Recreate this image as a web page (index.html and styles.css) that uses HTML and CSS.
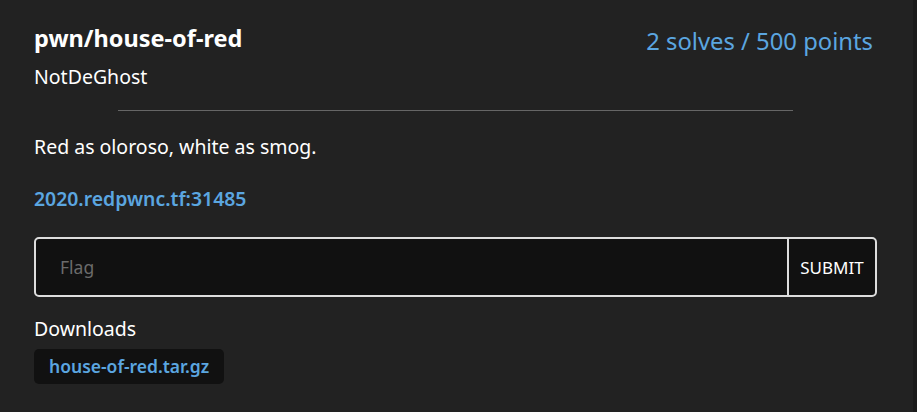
FILE: index.html
```html
<!DOCTYPE html>
<html>
<head>
<meta charset="utf-8">
<link rel="stylesheet" href="styles.css">
</head>
<body>
<div class="card">
  <div class="head">
    <div class="title-block">
      <h1 class="title">pwn/house-of-red</h1>
      <div class="author">NotDeGhost</div>
    </div>
    <div class="score">2 solves / 500 points</div>
  </div>
  <hr class="rule">
  <p class="desc">Red as oloroso, white as smog.</p>
  <a class="conn" href="#">2020.redpwnc.tf:31485</a>
  <form class="flag-form">
    <input class="flag-input" type="text" placeholder="Flag">
    <button class="submit" type="button">SUBMIT</button>
  </form>
  <div class="downloads">
    <div class="dl-label">Downloads</div>
    <a class="chip" href="#">house-of-red.tar.gz</a>
  </div>
</div>
</body>
</html>
```

FILE: styles.css
```css
html, body {
  margin: 0;
  padding: 0;
  background: #1b1b1b;
  height: 100%;
}
body {
  font-family: "Noto Sans", "Open Sans", sans-serif;
  color: #fff;
  display: flex;
}
.card {
  width: 913px;
  background: #222;
  box-sizing: border-box;
  padding: 23px 36px 0 34px;
  display: flex;
  flex-direction: column;
  align-items: flex-start;
}
.head {
  width: 100%;
  display: flex;
  justify-content: space-between;
  align-items: flex-start;
}
.title {
  margin: 0;
  font-size: 23.5px;
  font-weight: 700;
  line-height: 30px;
}
.author {
  margin-top: 11px;
  font-size: 19.5px;
  line-height: 26px;
}
.score {
  margin: 3px 4px 0 0;
  font-size: 23.8px;
  line-height: 30px;
  color: #5ba6e0;
}
.rule {
  align-self: center;
  width: 80%;
  border: 0;
  border-top: 1px solid #666;
  margin: 20px 0 0;
}
.desc {
  margin: 23px 0 0;
  font-size: 19.5px;
  line-height: 26px;
}
.conn {
  margin-top: 26px;
  font-size: 19.4px;
  line-height: 26px;
  font-weight: 600;
  color: #5ba6e0;
  text-decoration: none;
}
.flag-form {
  margin: 25px 0 0;
  width: 100%;
  height: 60px;
  display: flex;
  box-sizing: border-box;
  border: 2px solid #ddd;
  border-radius: 5px;
  background: #111;
  overflow: hidden;
}
.flag-input {
  flex: 1;
  background: transparent;
  border: 0;
  outline: none;
  padding: 0 0 0 24px;
  font-family: inherit;
  font-size: 17.5px;
  color: #fff;
}
.flag-input::placeholder {
  color: #6b6b6b;
}
.submit {
  width: 88px;
  background: transparent;
  border: 0;
  border-left: 2px solid #ddd;
  color: #fff;
  font-family: inherit;
  font-size: 17px;
  padding: 0;
}
.downloads {
  margin-top: 19px;
  display: flex;
  flex-direction: column;
  align-items: flex-start;
}
.dl-label {
  font-size: 19.5px;
  line-height: 26px;
}
.chip {
  margin-top: 7px;
  background: #111;
  border-radius: 5px;
  padding: 0 15px;
  height: 35px;
  line-height: 35px;
  font-size: 17.5px;
  font-weight: 600;
  color: #5ba6e0;
  text-decoration: none;
}
```
